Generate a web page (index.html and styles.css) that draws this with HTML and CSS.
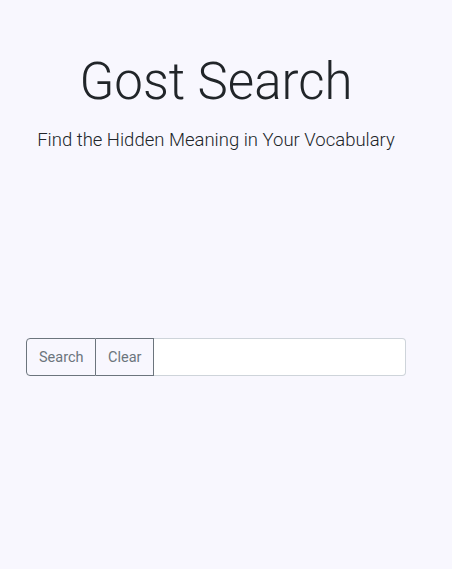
FILE: index.html
```html
<!DOCTYPE html>
<html lang="en">
<head>
<meta charset="utf-8">
<title>Gost Search</title>
<link rel="stylesheet" href="styles.css">
</head>
<body>
<main class="page">
  <header class="hero">
    <h1 class="title">Gost Search</h1>
    <p class="subtitle">Find the Hidden Meaning in Your Vocabulary</p>
  </header>
  <form class="search-group" onsubmit="return false">
    <button class="btn" type="submit">Search</button>
    <button class="btn btn-clear" type="button">Clear</button>
    <input class="search-input" type="text" aria-label="Search">
  </form>
</main>
</body>
</html>
```
FILE: styles.css
```css
html, body {
  margin: 0;
  padding: 0;
  background: #f8f7fe;
  height: 100%;
}
body {
  font-family: Roboto, "Liberation Sans", sans-serif;
  color: #212529;
}
.page {
  width: 380px;
  margin-left: 26px;
  display: flex;
  flex-direction: column;
}
.hero {
  text-align: center;
  padding-top: 48px;
}
.title {
  margin: 0;
  font-size: 51px;
  font-weight: 300;
  line-height: 68px;
}
.subtitle {
  margin: 12px -20px 0;
  font-size: 18.5px;
  font-weight: 300;
  line-height: 24px;
}
.search-group {
  margin-top: 186px;
  display: flex;
  height: 38px;
}
.btn {
  font-family: inherit;
  font-size: 14.5px;
  font-weight: 400;
  color: #6c757d;
  background: transparent;
  border: 1px solid #6c757d;
  padding: 0 12px;
  margin: 0;
  border-radius: 4px 0 0 4px;
  width: 70px;
}
.btn-clear {
  border-radius: 0;
  border-left: 0;
  width: 58px;
}
.search-input {
  flex: 1;
  min-width: 0;
  margin: 0;
  border: 1px solid #ced4da;
  border-left: 0;
  border-radius: 0 4px 4px 0;
  background: #fff;
  padding: 0 12px;
  font-family: inherit;
  font-size: 16px;
}
```
